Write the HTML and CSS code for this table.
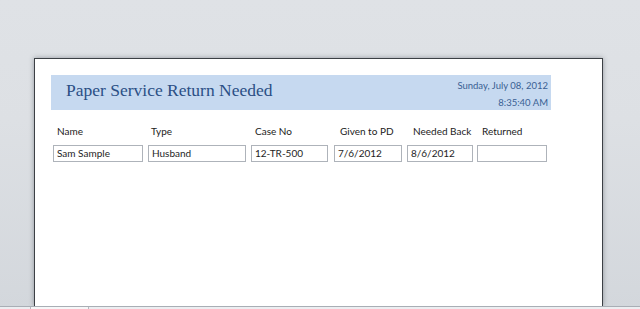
FILE: index.html
```html
<!DOCTYPE html>
<html>
<head>
<meta charset="utf-8">
<link rel="stylesheet" href="styles.css">
</head>
<body>
<div class="workspace">
  <div class="sheet">
    <div class="banner">
      <h1 class="title">Paper Service Return Needed</h1>
      <div class="stamp">
        <div>Sunday, July 08, 2012</div>
        <div>8:35:40 AM</div>
      </div>
    </div>
    <div class="fields">
      <div class="field f-name"><span class="label">Name</span><span class="box">Sam Sample</span></div>
      <div class="field f-type"><span class="label">Type</span><span class="box">Husband</span></div>
      <div class="field f-case"><span class="label">Case No</span><span class="box">12-TR-500</span></div>
      <div class="field f-given"><span class="label">Given to PD</span><span class="box">7/6/2012</span></div>
      <div class="field f-needed"><span class="label">Needed Back</span><span class="box">8/6/2012</span></div>
      <div class="field f-returned"><span class="label">Returned</span><span class="box"></span></div>
    </div>
  </div>
</div>
<div class="scrollbar">
  <span class="seg seg-a"></span><span class="seg seg-b"></span><span class="seg seg-c"></span>
</div>
</body>
</html>
```
FILE: styles.css
```css
html, body {
  margin: 0;
  padding: 0;
  height: 100%;
  overflow: hidden;
}

body {
  background: linear-gradient(#dfe2e6 0, #dde0e4 120px, #d3d7dc 309px);
  font-family: Lato, "Liberation Sans", sans-serif;
  display: flex;
  flex-direction: column;
}

.workspace {
  flex: 1;
  padding: 58px 0 0 34px;
  display: flex;
  min-height: 0;
}

.sheet {
  box-sizing: border-box;
  width: 569px;
  background: #fff;
  border: 1px solid #3c4045;
  border-bottom: none;
  box-shadow: 0 0 5px rgba(60, 66, 74, 0.45);
  padding: 16px 0 0 16px;
}

.banner {
  width: 500px;
  height: 35px;
  background: #c6d9f0;
  display: flex;
  justify-content: space-between;
  align-items: flex-start;
}

.title {
  margin: 3px 0 0 15px;
  font-family: "Liberation Serif", serif;
  font-weight: normal;
  font-size: 17.5px;
  color: #2b4f85;
  line-height: 24px;
}

.stamp {
  margin: 2px 3px 0 0;
  text-align: right;
  font-size: 9.5px;
  line-height: 17px;
  color: #3a5f93;
}

.fields {
  display: flex;
  margin: 15px 0 0 2px;
}

.field {
  display: flex;
  flex-direction: column;
}

.label {
  font-size: 10px;
  color: #222;
  line-height: 12px;
  padding-left: 4px;
  height: 12px;
  margin-bottom: 8px;
}

.box {
  display: block;
  box-sizing: border-box;
  height: 17px;
  border: 1px solid #aeb3ba;
  font-size: 10px;
  line-height: 12px;
  color: #1e1e1e;
  padding: 1px 0 0 3px;
}

.f-name .box { width: 90px; }
.f-type { margin-left: 5px; }
.f-type .label { padding-left: 3px; }
.f-type .box { width: 98px; }
.f-case { margin-left: 5px; }
.f-case .box { width: 77px; }
.f-given { margin-left: 6px; }
.f-given .label { padding-left: 6px; }
.f-given .box { width: 68px; }
.f-needed { margin-left: 5px; }
.f-needed .label { padding-left: 6px; }
.f-needed .box { width: 66px; }
.f-returned { margin-left: 4px; }
.f-returned .label { padding-left: 5px; }
.f-returned .box { width: 70px; }

.scrollbar {
  height: 2px;
  border-top: 1px solid #a9aeb5;
  background: #eceef1;
  display: flex;
}

.seg { display: block; height: 2px; }
.seg-a { width: 30px; }
.seg-b { width: 57px; border-left: 1px solid #b4b8be; background: #f6f7f8; }
.seg-c { width: 180px; border-left: 1px solid #b4b8be; }
```
